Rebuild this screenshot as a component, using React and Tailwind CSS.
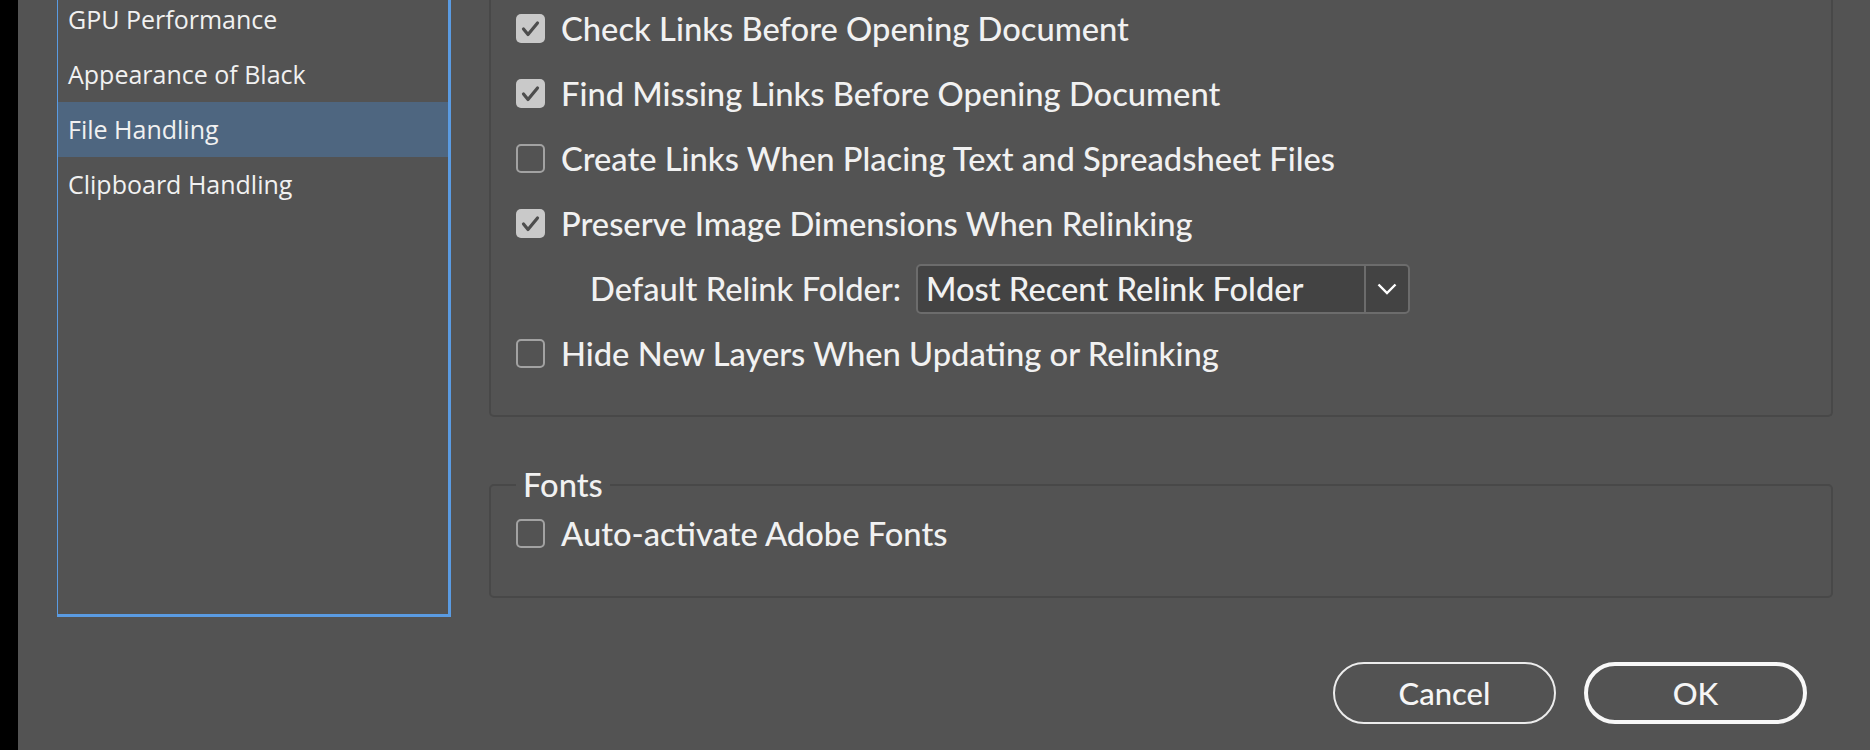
import React from "react";

function Checkbox({ checked }) {
  if (checked) {
    return (
      <div className="w-[29px] h-[29px] rounded-[5px] bg-[#c9c9c9] flex items-center justify-center shrink-0">
        <svg width="29" height="29" viewBox="0 0 29 29">
          <path d="M7.5 15 L12 20.5 L21.5 9" fill="none" stroke="#4d4d4d" strokeWidth="3.2" strokeLinecap="round" strokeLinejoin="round" />
        </svg>
      </div>
    );
  }
  return <div className="w-[29px] h-[29px] rounded-[5px] border-2 border-[#a2a2a2] shrink-0" />;
}

function CheckRow({ checked, label }) {
  return (
    <div className="h-[65px] flex items-center pl-[25px]">
      <Checkbox checked={checked} />
      <span className="ml-[16px] whitespace-nowrap">{label}</span>
    </div>
  );
}

export default function App() {
  const items = ["GPU Performance", "Appearance of Black", "File Handling", "Clipboard Handling"];
  return (
    <div className="w-[1870px] h-[750px] overflow-hidden bg-[#535353] flex font-[Lato,sans-serif] font-medium text-[#f1f1f1]">
      <div className="w-[18px] h-full bg-black shrink-0" />
      <div className="ml-[39px] w-[394px] h-[617px] shrink-0 border-l border-r-[3px] border-b-[3px] border-[#5a9be2] overflow-hidden">
        <div className="-mt-[8px] flex flex-col text-[25px] font-['Open_Sans',sans-serif] font-medium">
          {items.map((t) => (
            <div
              key={t}
              className={`h-[55px] flex items-center pl-[10px] whitespace-nowrap ${t === "File Handling" ? "bg-[#4e6680]" : ""}`}
            >
              {t}
            </div>
          ))}
        </div>
      </div>
      <div className="ml-[38px] mr-[37px] flex-1 flex flex-col text-[32.7px]">
        <div className="h-[417px] border-x-2 border-b-2 border-[#484848] rounded-b-[5px]">
          <div className="-mt-[4px] flex flex-col">
            <CheckRow checked label="Check Links Before Opening Document" />
            <CheckRow checked label="Find Missing Links Before Opening Document" />
            <CheckRow label="Create Links When Placing Text and Spreadsheet Files" />
            <CheckRow checked label="Preserve Image Dimensions When Relinking" />
            <div className="h-[65px] flex items-center pl-[99px]">
              <span className="w-[326px] whitespace-nowrap">Default Relink Folder:</span>
              <div className="flex h-[50px] w-[494px] rounded-[5px] border-2 border-[#6c6c6c] bg-[#434343]">
                <div className="flex-1 flex items-center pl-[8px] whitespace-nowrap">Most Recent Relink Folder</div>
                <div className="w-[44px] border-l-2 border-[#6c6c6c] flex items-center justify-center">
                  <svg width="20" height="12" viewBox="0 0 20 12">
                    <path d="M1.5 1.5 L10 10 L18.5 1.5" fill="none" stroke="#ffffff" strokeWidth="2.4" />
                  </svg>
                </div>
              </div>
            </div>
            <CheckRow label="Hide New Layers When Updating or Relinking" />
          </div>
        </div>
        <fieldset className="mt-[53px] border-2 border-[#484848] rounded-[5px] pb-[29px]">
          <legend className="ml-[25px] px-[7px] leading-[30px]">Fonts</legend>
          <div className="h-[67px] flex items-center pl-[25px]">
            <Checkbox />
            <span className="ml-[16px] whitespace-nowrap">Auto-activate Adobe Fonts</span>
          </div>
        </fieldset>
        <div className="mt-[64px] flex justify-end gap-[28px] pr-[26px]">
          <button className="w-[223px] h-[62px] rounded-full border-2 border-[#ececec] flex items-center justify-center text-[31px] text-[#f5f5f5]">
            Cancel
          </button>
          <button className="w-[223px] h-[62px] rounded-full border-[4px] border-[#f8f8f8] flex items-center justify-center text-[31px] text-[#f5f5f5]">
            OK
          </button>
        </div>
      </div>
    </div>
  );
}
